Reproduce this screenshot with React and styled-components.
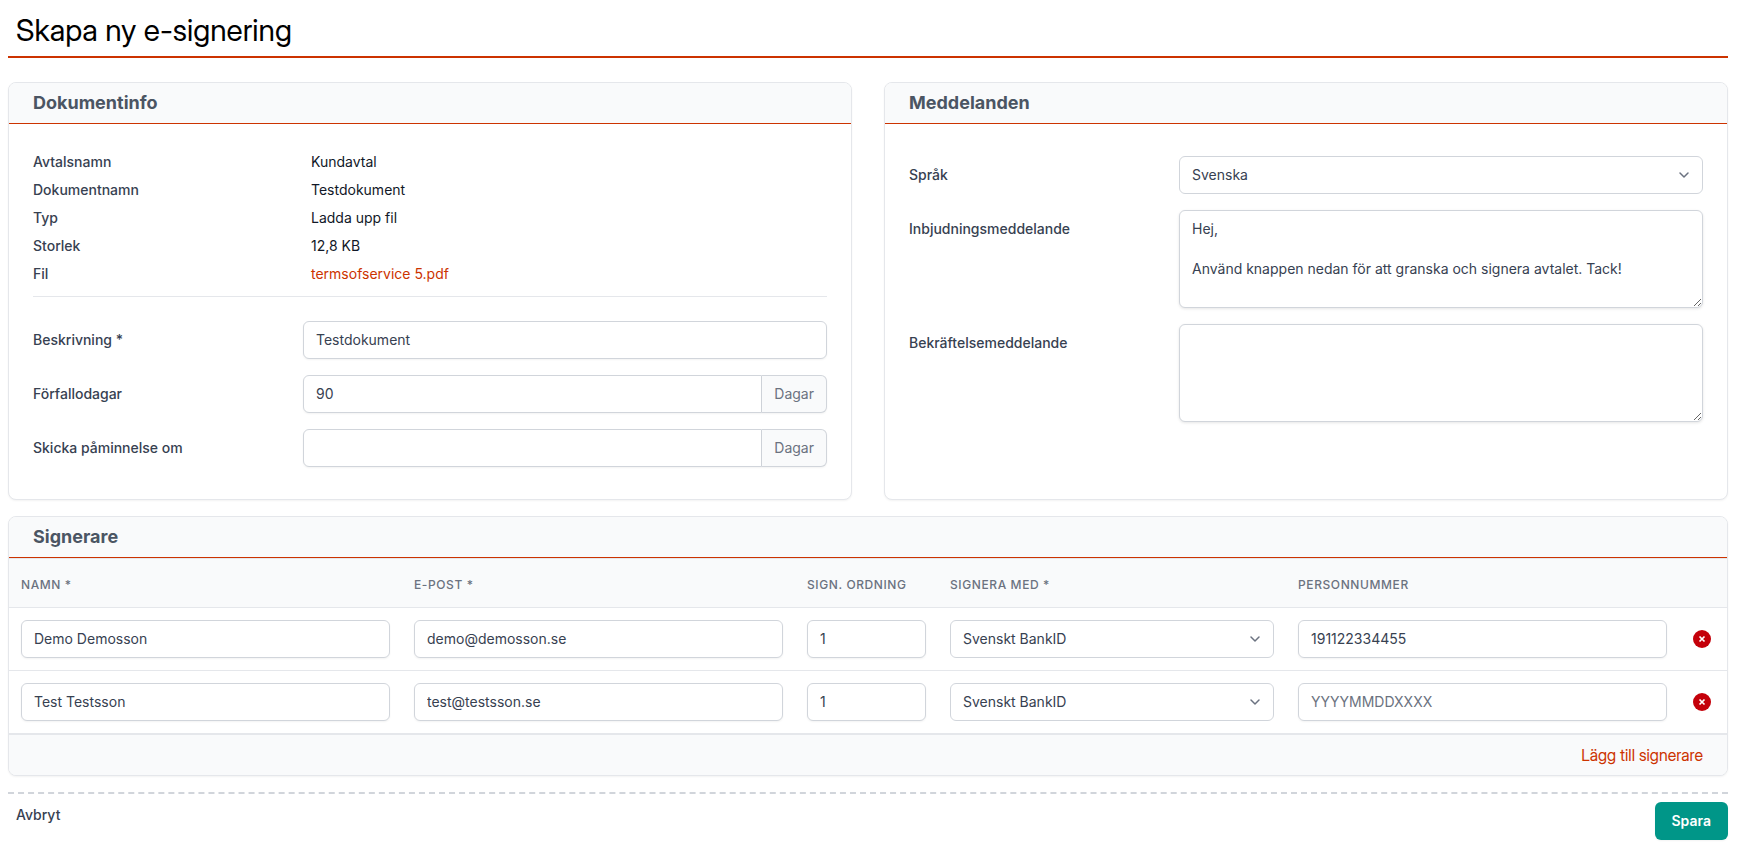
import React from 'react';
import styled, { createGlobalStyle, css } from 'styled-components';

const GlobalStyle = createGlobalStyle`
*, *::before, *::after {
  box-sizing: border-box;
}
body {
  margin: 0;
  background: #fff;
  color: #000;
  font-family: Inter, 'Liberation Sans', sans-serif;
  font-size: 14px;
  line-height: 20px;
}
`;

const Page = styled.form`
padding: 8px 9px 8px 8px;
`;

const Title = styled.h1`
margin: 0 0 24px;
padding: 4px 8px 8px;
border-bottom: 2px solid #cc3300;
font-family: 'Inter Display', Inter, 'Liberation Sans', sans-serif;
font-size: 30px;
line-height: 36px;
font-weight: 400;
`;

const Columns = styled.div`
display: grid;
grid-template-columns: 1fr 1fr;
gap: 32px;
margin-bottom: 16px;
`;

const Card = styled.section`
overflow: hidden;
border: 1px solid #e5e7eb;
border-radius: 8px;
background: #fff;
box-shadow: 0 1px 2px rgba(0, 0, 0, 0.05);
`;

const CardTitle = styled.h2`
margin: 0;
padding: 8px 24px;
border-bottom: 1px solid #cc3300;
background: #f9fafb;
color: #4b5563;
font-size: 18px;
line-height: 24px;
font-weight: 700;
`;

const CardBody = styled.div`
padding: 32px 24px;
`;

const InfoList = styled.dl`
margin: -8px 0 24px;
padding-bottom: 8px;
border-bottom: 1px solid #e5e7eb;
`;

const InfoRow = styled.div`
display: grid;
grid-template-columns: repeat(3, 1fr);
column-gap: 16px;
padding: 4px 0;
`;

const InfoName = styled.dt`
color: #374151;
font-weight: 500;
`;

const InfoValue = styled.dd`
grid-column: span 2;
margin: 0;
padding-left: 8px;
color: #111827;
`;

const Link = styled.a`
color: #cc3300;
text-decoration: none;
`;

const Fields = styled.div`
display: grid;
gap: 16px;
`;

const Field = styled.div`
display: grid;
grid-template-columns: repeat(3, 1fr);
column-gap: 16px;
align-items: start;
`;

const Label = styled.label`
padding-top: 9px;
color: #374151;
font-weight: 500;
`;

const Control = styled.div`
grid-column: span 2;
display: flex;
`;

const controlStyle = css`
display: block;
width: 100%;
min-width: 0;
margin: 0;
padding: 8px 12px;
border: 1px solid #d1d5db;
border-radius: 6px;
background: #fff;
color: #374151;
font: inherit;
box-shadow: 0 1px 2px rgba(0, 0, 0, 0.05);
`;

const Input = styled.input`
${controlStyle}
${({ $joined }) => $joined && 'border-radius: 6px 0 0 6px;'}
&::placeholder {
  color: #6b7280;
  opacity: 1;
}
`;

const TextArea = styled.textarea`
${controlStyle}
resize: vertical;
box-shadow: 0 1px 3px rgba(0, 0, 0, 0.1);
`;

const SelectWrap = styled.div`
display: grid;
width: 100%;
align-items: center;
> * {
  grid-area: 1 / 1;
}
`;

const SelectBox = styled.select`
${controlStyle}
appearance: none;
padding-right: 40px;
box-shadow: none;
`;

const Chevron = styled.svg`
justify-self: end;
width: 20px;
height: 20px;
margin-right: 9px;
pointer-events: none;
`;

const Addon = styled.span`
padding: 8px 12px;
border: 1px solid #d1d5db;
border-left: 0;
border-radius: 0 6px 6px 0;
background: #f9fafb;
color: #6b7280;
box-shadow: 0 1px 2px rgba(0, 0, 0, 0.05);
`;

const Table = styled.table`
width: 100%;
table-layout: fixed;
border-collapse: separate;
border-spacing: 0;
border-top: 1px solid #e5e7eb;
border-bottom: 1px solid #e5e7eb;
`;

const Col = styled.col`
width: ${({ $width }) => ($width ? `${$width}px` : 'auto')};
`;

const Th = styled.th`
padding: 18px 12px 14px;
border-bottom: 1px solid #e5e7eb;
background: #f9fafb;
color: #6b7280;
font-size: 12px;
line-height: 16px;
font-weight: 500;
letter-spacing: 0.05em;
text-align: left;
text-transform: uppercase;
white-space: nowrap;
`;

const Td = styled.td`
padding: 12px;
border-bottom: 1px solid #e5e7eb;
`;

const RemoveButton = styled.button`
display: block;
padding: 0 2px;
border: 0;
background: none;
cursor: pointer;
svg {
  display: block;
  width: 18px;
  height: 18px;
}
`;

const CardFooter = styled.div`
padding: 8px 24px;
background: #f9fafb;
text-align: right;
font-family: 'Inter Display', Inter, 'Liberation Sans', sans-serif;
font-size: 16px;
line-height: 24px;
`;

const Actions = styled.div`
display: flex;
justify-content: space-between;
align-items: flex-start;
margin-top: 16px;
padding-top: 8px;
border-top: 2px dashed #d1d5db;
`;

const CancelLink = styled.a`
padding: 3px 8px;
color: #374151;
font-weight: 500;
text-decoration: none;
`;

const SaveButton = styled.button`
padding: 9px 17px;
border: 0;
border-radius: 6px;
background: #009688;
color: #fff;
font: inherit;
font-weight: 600;
box-shadow: 0 1px 2px rgba(0, 0, 0, 0.05);
cursor: pointer;
`;

const info = [
    ['Avtalsnamn', 'Kundavtal'],
    ['Dokumentnamn', 'Testdokument'],
    ['Typ', 'Ladda upp fil'],
    ['Storlek', '12,8 KB'],
];

const signers = [
    { name: 'Demo Demosson', email: 'demo@demosson.se', ssn: '191122334455' },
    { name: 'Test Testsson', email: 'test@testsson.se', ssn: '' },
];

const Select = ({ options, ...props }) => (
    <SelectWrap>
        <SelectBox {...props}>
            {options.map(option => <option key={option}>{option}</option>)}
        </SelectBox>
        <Chevron viewBox="0 0 20 20" fill="none" aria-hidden="true">
            <path d="M6 8l4 4 4-4" stroke="#6b7280" strokeWidth="1.5" strokeLinecap="round" strokeLinejoin="round" />
        </Chevron>
    </SelectWrap>
);

const FormField = ({ id, label, children }) => (
    <Field>
        <Label htmlFor={id}>{label}</Label>
        <Control>{children}</Control>
    </Field>
);

const DocumentInfo = () => (
    <Card>
        <CardTitle>Dokumentinfo</CardTitle>
        <CardBody>
            <InfoList>
                {info.map(([name, value]) => (
                    <InfoRow key={name}>
                        <InfoName>{name}</InfoName>
                        <InfoValue>{value}</InfoValue>
                    </InfoRow>
                ))}
                <InfoRow>
                    <InfoName>Fil</InfoName>
                    <InfoValue><Link href="#file">termsofservice 5.pdf</Link></InfoValue>
                </InfoRow>
            </InfoList>
            <Fields>
                <FormField id="description" label="Beskrivning *">
                    <Input id="description" defaultValue="Testdokument" />
                </FormField>
                <FormField id="dueDays" label="Förfallodagar">
                    <Input id="dueDays" defaultValue="90" $joined />
                    <Addon>Dagar</Addon>
                </FormField>
                <FormField id="reminder" label="Skicka påminnelse om">
                    <Input id="reminder" $joined />
                    <Addon>Dagar</Addon>
                </FormField>
            </Fields>
        </CardBody>
    </Card>
);

const Messages = () => (
    <Card>
        <CardTitle>Meddelanden</CardTitle>
        <CardBody>
            <Fields>
                <FormField id="language" label="Språk">
                    <Select id="language" options={['Svenska', 'Engelska']} />
                </FormField>
                <FormField id="invitation" label="Inbjudningsmeddelande">
                    <TextArea
                        id="invitation"
                        rows={4}
                        defaultValue={'Hej,\n\nAnvänd knappen nedan för att granska och signera avtalet. Tack!'}
                    />
                </FormField>
                <FormField id="confirmation" label="Bekräftelsemeddelande">
                    <TextArea id="confirmation" rows={4} />
                </FormField>
            </Fields>
        </CardBody>
    </Card>
);

const SignerRow = ({ signer }) => (
    <tr>
        <Td><Input aria-label="Namn" defaultValue={signer.name} /></Td>
        <Td><Input type="email" aria-label="E-post" defaultValue={signer.email} /></Td>
        <Td><Input aria-label="Sign. ordning" defaultValue="1" /></Td>
        <Td><Select aria-label="Signera med" options={['Svenskt BankID']} /></Td>
        <Td><Input aria-label="Personnummer" placeholder="YYYYMMDDXXXX" defaultValue={signer.ssn} /></Td>
        <Td>
            <RemoveButton type="button" aria-label="Ta bort signerare">
                <svg viewBox="0 0 18 18" aria-hidden="true">
                    <circle cx="9" cy="9" r="9" fill="#c4000a" />
                    <path d="M6.5 6.5l5 5m0-5l-5 5" stroke="#fff" strokeWidth="1.7" />
                </svg>
            </RemoveButton>
        </Td>
    </tr>
);

const Signers = () => (
    <Card>
        <CardTitle>Signerare</CardTitle>
        <Table>
            <colgroup>
                <Col />
                <Col />
                <Col $width={143} />
                <Col $width={348} />
                <Col />
                <Col $width={48} />
            </colgroup>
            <thead>
                <tr>
                    <Th>Namn *</Th>
                    <Th>E-post *</Th>
                    <Th>Sign. ordning</Th>
                    <Th>Signera med *</Th>
                    <Th>Personnummer</Th>
                    <Th />
                </tr>
            </thead>
            <tbody>
                {signers.map(signer => <SignerRow key={signer.email} signer={signer} />)}
            </tbody>
        </Table>
        <CardFooter>
            <Link href="#add">Lägg till signerare</Link>
        </CardFooter>
    </Card>
);

const App = () => (
    <Page onSubmit={e => e.preventDefault()}>
        <GlobalStyle />
        <Title>Skapa ny e-signering</Title>
        <Columns>
            <DocumentInfo />
            <Messages />
        </Columns>
        <Signers />
        <Actions>
            <CancelLink href="#cancel">Avbryt</CancelLink>
            <SaveButton type="submit">Spara</SaveButton>
        </Actions>
    </Page>
);

export default App;
